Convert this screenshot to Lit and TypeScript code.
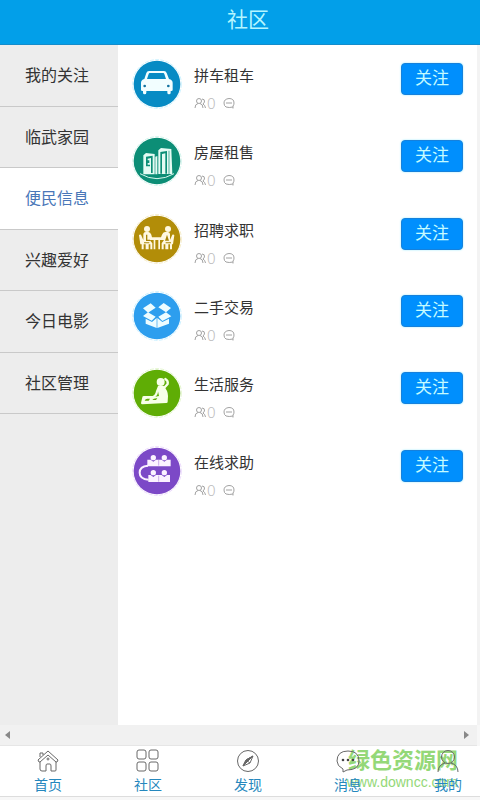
import { LitElement, html, svg, css } from "lit";
import { customElement, state } from "lit/decorators.js";

const art = {
  car: svg`
    <path fill="#f2feff" fill-rule="evenodd" d="M43 42q2-6 8-6h45q6 0 8 6l7 18q11 3 11 11v21q0 4-4 4h-2v5q0 5-5 5t-5-5v-5H43v5q0 5-5 5t-5-5v-5h-2q-4 0-4-4V71q0-8 10-11zM53 42q-2 0-3 3l-5 15h57l-5-15q-1-3-3-3z"/>
    <circle cx="38" cy="81" r="4" fill="#1272a0"/><circle cx="109" cy="81" r="4" fill="#1272a0"/>`,
  house: svg`
    <path fill="#e4fbf3" d="M34 58l8-7 26 3v61H34zM79 43l8-7 31 3 3 75H79zM70 62l6-2v55h-6z"/>
    <path fill="#0c8e76" d="M42 62l20-3v52h-5V66l-10 2v18h7v5H42zM85 48l20-3v68h-5V52l-10 2v59h-5zM47 73h5v8h-5zM110 44h2v70h-2z"/>
    <path d="M24 113q51 30 102 0" fill="none" stroke="#d8f8ee" stroke-width="3"/>`,
  job: svg`
    <g fill="#fff8e0"><circle cx="45" cy="45" r="9"/><circle cx="108" cy="45" r="9"/>
    <path d="M21 64q1-3 6-2l7 16V60q1-6 7-6h8q6 0 9 8l2 8h27l3-8q3-8 9-8h8q6 0 7 6v18l7-16q5-1 6 2l-4 27h-3v15h-6V91h-5v15h-9V91h-5v15h-6V88l7-10H84v28h-5V78h-9v28h-5V78H53l8 10v18h-6V91h-5v15h-9V91h-6v15h-6V91h-4z"/></g>
    <path fill="#a98509" d="M42 62h4v15h8v4H42zM105 62l-6 18h12zM36 85h16v3H36zM101 85h16v3h-16z"/>`,
  box: svg`
    <g fill="#edfcff"><path d="M56 37l15 13-23 15-15-13zM95 36l22 15-15 13-23-15zM48 64l23 13-12 12-26-14zM102 64l16 12-27 14-12-13z"/>
    <path d="M41 83l19 10 14-12v30L41 98zM111 83L91 93 76 81v30l35-13z"/></g>`,
  service: svg`
    <g fill="#f7ffe8"><circle cx="86" cy="42" r="12"/>
    <path d="M78 54h17q13 14 13 30l-1 17q0 4-4 4l-72 4q-4 0-4-4l4-17q0-4 5-4h26q8-3 10-15z"/></g>
    <path d="M100 33q9 5 7 15l-11 12" fill="none" stroke="#f7ffe8" stroke-width="7" stroke-linejoin="round" stroke-linecap="round"/>
    <path fill="#5fad05" d="M78 70q0 12-8 16l11-2zM38 98q2-6 8-6h8l-4 6zM61 96q4-6 15-5l-4 5z"/>`,
  help: svg`
    <g fill="#fbf2ff"><circle cx="64" cy="35" r="8"/><circle cx="97" cy="35" r="8"/>
    <circle cx="64" cy="80" r="8"/><circle cx="97" cy="80" r="8"/>
    <path d="M46 41h10l8 6 8-6h17l8 6 8-6h11v20H46zM49 87h7l8 6 8-6h17l8 6 8-6h9v21H49z"/></g>
    <path d="M48 59q-25 2-25 21t27 21" fill="none" stroke="#fbf2ff" stroke-width="6"/>
    <path d="M80 42v17M80 89v18" stroke="#b48be0" stroke-width="2"/>`,
};

const GROUPS = [
  { name: "拼车租车", color: "#078bc4", ring: "#b5edff", art: art.car },
  { name: "房屋租售", color: "#0c8e76", ring: "#b9eee3", art: art.house },
  { name: "招聘求职", color: "#b28d08", ring: "#f1e3ac", art: art.job },
  { name: "二手交易", color: "#2d9eee", ring: "#b3eaff", art: art.box },
  { name: "生活服务", color: "#5fad05", ring: "#d5f2b5", art: art.service },
  { name: "在线求助", color: "#7c49c7", ring: "#e2c8fa", art: art.help },
];

const CATEGORIES = ["我的关注", "临武家园", "便民信息", "兴趣爱好", "今日电影", "社区管理"];

const TABS = [
  { name: "首页", icon: svg`<path d="M2 11L12 2l10 9-1 2h-1v8q0 1-1 1h-4v-5q0-2-1-2h-3q-1 0-1 2v5H6q-2 0-2-2v-7H3zM4 13l8-7 8 7M4 8V4h3v2"/><circle cx="12" cy="10" r="1"/>` },
  { name: "社区", icon: svg`<rect x="1" y="1" width="9" height="9" rx="2"/><rect x="13" y="1" width="9" height="9" rx="2"/><rect x="1" y="13" width="9" height="9" rx="2"/><rect x="13" y="13" width="9" height="9" rx="2"/>` },
  { name: "发现", icon: svg`<circle cx="12" cy="12" r="10.500"/><path d="M17 7l-3 7-7 3 3-6zM10 11l4 3M16 8l-6 3"/><path d="M10 11l7-4-5 5-5 5z" fill="#666"/>` },
  { name: "消息", icon: svg`<path d="M7 20q-6-3-6-8 0-10 11-10t11 10q0 9-12 9l-4 2z"/><g fill="#444" stroke="none"><circle cx="7" cy="11" r="1.300"/><circle cx="12" cy="11" r="1.300"/><circle cx="17" cy="11" r="1.300"/></g>` },
  { name: "我的", icon: svg`<circle cx="12" cy="8" r="6.500"/><path d="M2 23q0-7 7-9M22 23q0-7-7-9"/>` },
];

@customElement("app-root")
export class AppRoot extends LitElement {
  @state() private selected = 2;

  static styles = css`
    :host {
      display: flex;
      flex-direction: column;
      min-height: 100vh;
      background: #f7f7f7;
      color: #333;
      font-family: "Liberation Sans", "Noto Sans CJK SC", sans-serif;
      font-size: 16px;
      line-height: 24px;
    }
    * { box-sizing: border-box; }
    button { font: inherit; border: 0; padding: 0; margin: 0; cursor: pointer; }
    svg { display: block; }

    .header {
      height: 45px;
      padding: 0 0 4px 16px;
      display: flex;
      align-items: center;
      justify-content: center;
      background: #029fe9;
      border-bottom: 1px solid #148ccb;
    }
    .heading { margin: 0; font-size: 21px; font-weight: 400; color: #b4f6ff; }

    .main { flex: 1; display: flex; background: #fff; border-right: 3px solid #f3f3f3; }
    .sidebar { width: 118px; background: #ededed; }
    .categories { display: grid; grid-auto-rows: 1fr; height: 369px; }
    .category {
      background: #ededed;
      color: #333;
      border-bottom: 1px solid #c9c9c9;
      padding: 2px 4px 0 0;
    }
    .category.active { background: #fff; color: #4a77b8; }

    .groups {
      flex: 1;
      display: grid;
      grid-auto-rows: 1fr;
      height: 464px;
      margin: 0;
      padding: 0 14px;
      list-style: none;
    }
    .group { display: flex; align-items: flex-start; padding-top: 14px; }
    .info { flex: 1; padding-left: 12px; }
    .name { margin: 0; padding-top: 5px; font-size: 15px; font-weight: 400; line-height: 24px; }
    .meta { display: flex; align-items: center; height: 16px; margin-top: 7px; color: #bbb; }
    .meta .count { margin: 0 7px 0 1px; font-family: "Noto Sans", sans-serif; font-size: 15px; font-weight: 300; }
    .follow {
      width: 62px;
      height: 32px;
      margin-top: 4px;
      border: 1px solid #1681dc;
      border-radius: 4px;
      background: #008ffd;
      box-shadow: 0 0 2px #8ee8ff;
      color: #c5fbff;
      font-size: 17px;
      line-height: 30px;
    }

    .scroller {
      height: 21px;
      margin-right: 3px;
      padding: 0 8px 0 5px;
      display: flex;
      align-items: center;
      justify-content: space-between;
      background: #f1f1f1;
      border-bottom: 1px solid #e6e6e6;
    }
    .tabs {
      position: relative;
      height: 51px;
      margin-bottom: 3px;
      padding: 3px 8px 0 24px;
      display: flex;
      justify-content: space-between;
      background: #fff;
      border-bottom: 1px solid #ddd;
    }
    .tab {
      position: relative;
      z-index: 1;
      width: 48px;
      display: flex;
      flex-direction: column;
      align-items: center;
      color: #2587bd;
      font-size: 14px;
      line-height: 20px;
      text-decoration: none;
    }
    .tab svg { margin-bottom: 2px; }
    .mark {
      position: absolute;
      right: 22px;
      top: 2px;
      margin: 0;
      color: #94d878;
      font-size: 14px;
      line-height: 16px;
      text-align: right;
      pointer-events: none;
    }
    .mark strong { display: block; font-size: 22px; line-height: 26px; }
  `;

  render() {
    return html`
      <header class="header"><h1 class="heading">社区</h1></header>
      <main class="main">
        <nav class="sidebar">
          <div class="categories">
            ${CATEGORIES.map((name, i) => html`
              <button class="category ${i === this.selected ? "active" : ""}" @click=${() => (this.selected = i)}>${name}</button>`)}
          </div>
        </nav>
        <ul class="groups">
          ${GROUPS.map((g) => html`
            <li class="group">
              <svg width="50" height="50" viewBox="0 0 150 150" aria-hidden="true">
                <circle cx="75" cy="75" r="73" fill="none" stroke=${g.ring} stroke-width="2" stroke-dasharray="12 4"/>
                <circle cx="75" cy="75" r="70" fill=${g.color}/>
                ${g.art}
              </svg>
              <div class="info">
                <h2 class="name">${g.name}</h2>
                <div class="meta">
                  <svg width="12" height="12" viewBox="0 0 12 12" fill="none" stroke="#a2a2a2" aria-hidden="true">
                    <circle cx="5" cy="4" r="2.500"/><path d="M1 11q0-4 3-4.500M9 11q0-4-3-4.500M8 2q3 0 2.500 3L9 7q2 1 2.500 4"/>
                  </svg>
                  <span class="count">0</span>
                  <svg width="12" height="12" viewBox="0 0 12 12" fill="none" stroke="#a2a2a2" aria-hidden="true">
                    <path d="M10 10q-4 1-7 0-2-1-2-4 0-4 5-4.500 5 0 5 4.500 0 2-1 3v2.500M3 6h6"/>
                  </svg>
                </div>
              </div>
              <button class="follow">关注</button>
            </li>`)}
        </ul>
      </main>
      <div class="scroller" aria-hidden="true">
        <svg width="5" height="8" viewBox="0 0 5 8"><path d="M5 0v8L0 4z" fill="#888"/></svg>
        <svg width="5" height="8" viewBox="0 0 5 8"><path d="M0 0v8l5-4z" fill="#888"/></svg>
      </div>
      <nav class="tabs">
        ${TABS.map((t) => html`
          <a class="tab" href="#">
            <svg width="24" height="24" viewBox="0 0 24 24" fill="none" stroke="#686868" stroke-width="1" aria-hidden="true">${t.icon}</svg>
            ${t.name}
          </a>`)}
        <p class="mark"><strong>绿色资源网</strong>www.downcc.com</p>
      </nav>
    `;
  }
}
